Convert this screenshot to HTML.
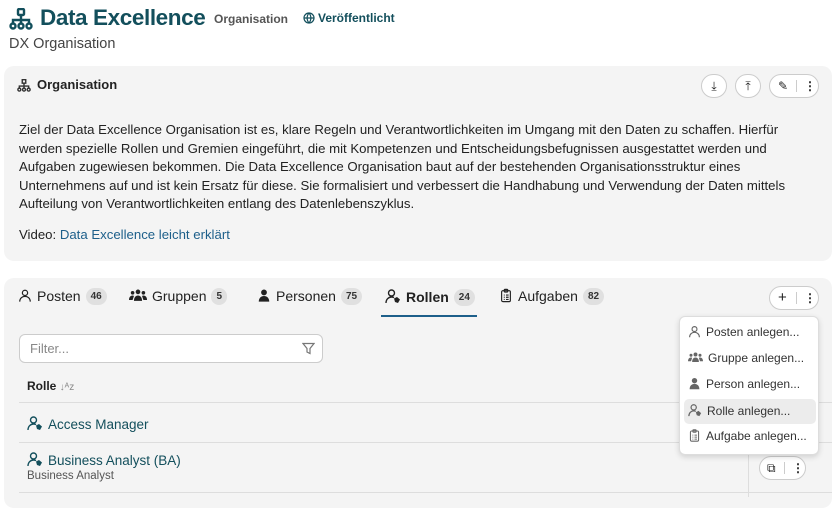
<!DOCTYPE html>
<html><head><meta charset="utf-8"><style>
*{box-sizing:border-box;margin:0;padding:0}
body{width:837px;height:497px;overflow:hidden;background:#fff;font-family:"Liberation Sans",sans-serif;color:#222;position:relative}
.a{position:absolute;white-space:nowrap}
.card{position:absolute;background:#f4f4f4;border-radius:10px}
.teal{color:#134f5c}
.badge{display:inline-block;background:#e0e0e0;border-radius:10px;font-size:10px;font-weight:bold;padding:3px 5px;margin-left:5px;vertical-align:2px;color:#333}
.tab{font-size:14px;color:#222}
.tab svg,.mi svg,.ic{vertical-align:-2px;margin-right:5px}
.btn{position:absolute;border:1px solid #ccc;background:#fff;border-radius:14px;height:24px}
.menu{position:absolute;left:679px;top:316px;width:140px;height:139px;background:#fff;border:1px solid #ddd;border-radius:6px;box-shadow:0 2px 6px rgba(0,0,0,.15)}
.mi{position:absolute;left:8px;font-size:12px;color:#333}
.line{position:absolute;left:19px;width:813px;height:1px;background:#ddd}
</style></head><body>
<svg style="display:none"><defs>
<symbol id="po" viewBox="0 0 16 16"><g fill="none" stroke="currentColor" stroke-width="1.4"><circle cx="8" cy="5" r="3"/><path d="M2 15c0-4 3-6 6-6s6 2 6 6"/></g></symbol>
<symbol id="gr" viewBox="0 0 20 16"><g fill="currentColor"><circle cx="10" cy="4" r="2.6"/><circle cx="4" cy="5" r="2"/><circle cx="16" cy="5" r="2"/><path d="M5.5 14c0-4 2-6 4.5-6s4.5 2 4.5 6z"/><path d="M0 13c0-3 1.5-5 4-5 1 0 1.5.5 1.5.5L4 13z"/><path d="M20 13c0-3-1.5-5-4-5-1 0-1.5.5-1.5.5L16 13z"/></g></symbol>
<symbol id="pe" viewBox="0 0 16 16"><g fill="currentColor"><circle cx="8" cy="4.5" r="3.3"/><path d="M2 15c0-4 2.5-6.5 6-6.5s6 2.5 6 6.5z"/></g></symbol>
<symbol id="ro" viewBox="0 0 16 16"><g fill="none" stroke="currentColor" stroke-width="1.4"><circle cx="6.5" cy="5" r="3"/><path d="M1 15c0-4 3-6 5.5-6 1.2 0 2 .3 2.5.6"/></g><path d="M9 10.5l3-1.5 3 2.5-2 3.5-3-1z" fill="currentColor"/></symbol>
<symbol id="cl" viewBox="0 0 16 16"><g fill="none" stroke="currentColor" stroke-width="1.3"><rect x="3" y="2.5" width="10" height="12.5" rx="1.5"/><rect x="6" y="1" width="4" height="3" rx=".8"/><path d="M5.5 7.5h1M8 7.5h3M5.5 10h1M8 10h3M5.5 12.5h1M8 12.5h3"/></g></symbol>
</defs></svg>
<svg class="a" style="left:9px;top:8px" width="24" height="22" viewBox="0 0 24 22" fill="none" stroke="#134f5c" stroke-width="2.4"><rect x="9" y="1" width="6" height="6" rx="1"/><path d="M12 7v5M4 16v-4h16v4M12 12v4"/><circle cx="4" cy="18" r="2.5"/><circle cx="12" cy="18" r="2.5"/><circle cx="20" cy="18" r="2.5"/></svg>
<div class="a teal" style="left:40px;top:5px;font-size:22.5px;font-weight:bold;letter-spacing:-0.4px">Data Excellence</div>
<div class="a" style="left:214px;top:12px;font-size:12px;font-weight:bold;color:#555">Organisation</div>
<div class="a teal" style="left:303px;top:11px;font-size:12px;font-weight:bold"><svg class="ic" width="12" height="12" viewBox="0 0 12 12" fill="none" stroke="#134f5c" stroke-width="1.2" style="margin-right:3px"><circle cx="6" cy="6" r="5"/><path d="M1 6h10M6 1c-2.5 3-2.5 7 0 10M6 1c2.5 3 2.5 7 0 10"/></svg>Veröffentlicht</div>
<div class="a" style="left:9px;top:36px;font-size:14.5px;color:#444">DX Organisation</div>

<div class="card" style="left:4px;top:66px;width:828px;height:195px"></div>
<svg class="a" style="left:17px;top:79px" width="14" height="13" viewBox="0 0 24 22" fill="none" stroke="#333" stroke-width="2.4"><rect x="9" y="1" width="6" height="6"/><path d="M12 7v5M4 16v-4h16v4M12 12v4"/><circle cx="4" cy="18" r="2.5"/><circle cx="12" cy="18" r="2.5"/><circle cx="20" cy="18" r="2.5"/></svg>
<div class="a" style="left:37px;top:77px;font-size:13px;font-weight:bold">Organisation</div>
<div class="btn" style="left:701px;top:74px;width:26px;text-align:center;font-size:12px;line-height:22px">⤓</div>
<div class="btn" style="left:735px;top:74px;width:26px;text-align:center;font-size:12px;line-height:22px">⤒</div>
<div class="btn" style="left:769px;top:74px;width:50px;font-size:12px;line-height:22px"><span style="position:absolute;left:8px">✎</span><span style="position:absolute;left:26px;top:5px;width:1px;height:12px;background:#ccc"></span><span style="position:absolute;left:34px;font-weight:bold">⋮</span></div>
<div class="a" style="left:19px;top:121px;font-size:13.2px;line-height:18.6px;white-space:normal;width:800px">Ziel der Data Excellence Organisation ist es, klare Regeln und Verantwortlichkeiten im Umgang mit den Daten zu schaffen. Hierfür<br>werden spezielle Rollen und Gremien eingeführt, die mit Kompetenzen und Entscheidungsbefugnissen ausgestattet werden und<br>Aufgaben zugewiesen bekommen. Die Data Excellence Organisation baut auf der bestehenden Organisationsstruktur eines<br>Unternehmens auf und ist kein Ersatz für diese. Sie formalisiert und verbessert die Handhabung und Verwendung der Daten mittels<br>Aufteilung von Verantwortlichkeiten entlang des Datenlebenszyklus.</div>
<div class="a" style="left:19px;top:227px;font-size:13.2px">Video: <span style="color:#1d5f8a">Data Excellence leicht erklärt</span></div>

<div class="card" style="left:4px;top:278px;width:828px;height:230px"></div>
<div class="a tab" style="left:18px;top:288px"><svg width="14" height="15"><use href="#po"/></svg>Posten<span class="badge">46</span></div>
<div class="a tab" style="left:129px;top:288px"><svg width="18" height="15"><use href="#gr"/></svg>Gruppen<span class="badge">5</span></div>
<div class="a tab" style="left:257px;top:288px"><svg width="14" height="15"><use href="#pe"/></svg>Personen<span class="badge">75</span></div>
<div class="a tab" style="left:385px;top:288px;font-weight:bold"><svg width="16" height="16"><use href="#ro"/></svg>Rollen<span class="badge">24</span></div>
<div class="a" style="left:381px;top:315px;width:96px;height:2px;background:#1d5f8a"></div>
<div class="a tab" style="left:499px;top:288px"><svg width="14" height="15"><use href="#cl"/></svg>Aufgaben<span class="badge">82</span></div>
<div class="btn" style="left:769px;top:286px;width:50px;font-size:15px;line-height:22px"><span style="position:absolute;left:8px">+</span><span style="position:absolute;left:26px;top:5px;width:1px;height:12px;background:#ccc"></span><span style="position:absolute;left:34px;font-weight:bold;font-size:12px">⋮</span></div>

<div class="a" style="left:19px;top:334px;width:304px;height:29px;background:#fff;border:1px solid #ccc;border-radius:6px"></div>
<div class="a" style="left:30px;top:341px;font-size:13px;color:#888">Filter...</div>
<svg class="a" style="left:302px;top:342px" width="13" height="13" viewBox="0 0 13 13" fill="none" stroke="#777" stroke-width="1.2"><path d="M1 1.5h11L8 6.5v5l-3-1.5V6.5z"/></svg>
<div class="a" style="left:27px;top:379px;font-size:12px;font-weight:bold">Rolle <span style="font-weight:normal;color:#888;font-size:10px">↓ᴬz</span></div>
<div class="line" style="top:402px"></div>
<div class="a teal" style="left:27px;top:415px;font-size:13.5px"><svg class="ic" width="16" height="16" style="color:#134f5c"><use href="#ro"/></svg>Access Manager</div>
<div class="line" style="top:442px"></div>
<div class="a teal" style="left:27px;top:451px;font-size:13.5px"><svg class="ic" width="16" height="16" style="color:#134f5c"><use href="#ro"/></svg>Business Analyst (BA)</div>
<div class="a" style="left:27px;top:470px;font-size:11.5px;color:#555">Business Analyst</div>
<div class="line" style="top:492px"></div>
<div class="a" style="left:748px;top:442px;width:1px;height:55px;background:#ddd"></div>
<div class="btn" style="left:759px;top:456px;width:47px;font-size:12px;line-height:22px"><span style="position:absolute;left:7px">⧉</span><span style="position:absolute;left:24px;top:5px;width:1px;height:12px;background:#ccc"></span><span style="position:absolute;left:32px;font-weight:bold">⋮</span></div>

<div class="menu">
<div class="a" style="left:4px;top:82px;width:132px;height:25px;background:#ececec;border-radius:5px"></div>
<div class="mi" style="top:8px"><svg width="13" height="13" style="color:#666"><use href="#po"/></svg>Posten anlegen...</div>
<div class="mi" style="top:34px"><svg width="15" height="13" style="color:#666"><use href="#gr"/></svg>Gruppe anlegen...</div>
<div class="mi" style="top:60px"><svg width="13" height="13" style="color:#666"><use href="#pe"/></svg>Person anlegen...</div>
<div class="mi" style="top:86px"><svg width="14" height="14" style="color:#666"><use href="#ro"/></svg>Rolle anlegen...</div>
<div class="mi" style="top:112px"><svg width="13" height="13" style="color:#666"><use href="#cl"/></svg>Aufgabe anlegen...</div>
</div>
</body></html>
